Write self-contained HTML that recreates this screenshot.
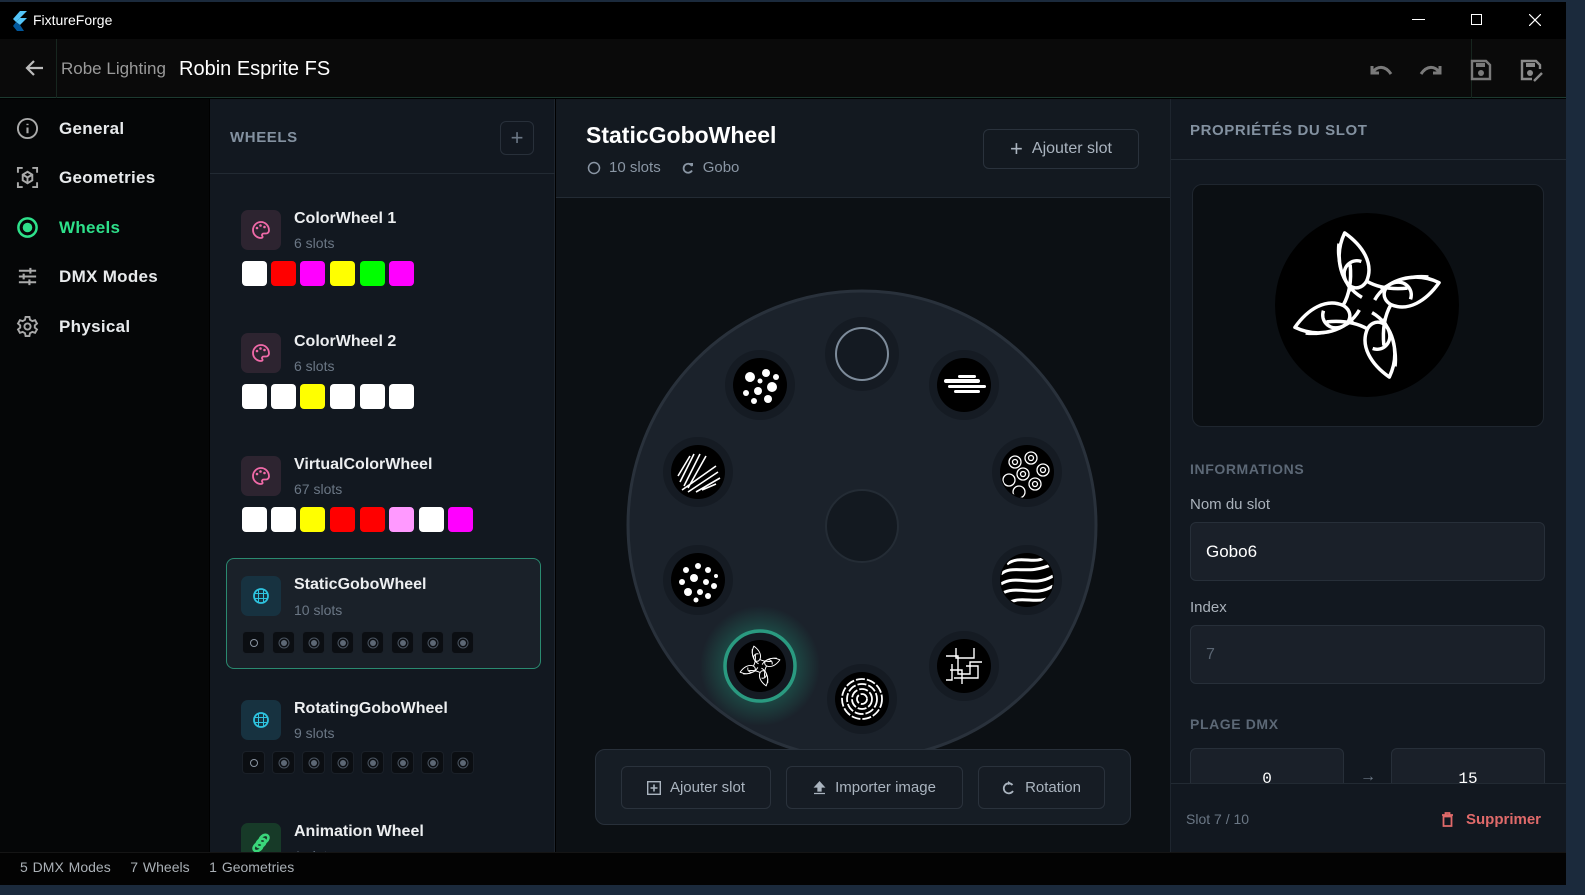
<!DOCTYPE html>
<html><head><meta charset="utf-8"><style>
*{box-sizing:border-box;margin:0;padding:0}
body{width:1585px;height:895px;overflow:hidden;background:#1b2a3c;font-family:"Liberation Sans",sans-serif;position:relative}
.abs{position:absolute}
.win{position:absolute;left:0;top:2px;width:1566px;height:883px;background:#000;overflow:hidden}
.nav{position:absolute;left:16px;display:flex;align-items:center;font-size:17px;color:#e8eaec;font-weight:bold;letter-spacing:.3px}
.nav svg{margin-right:20px}
.card{position:absolute;left:226px;width:315px;height:112px;border-radius:8px}
.ic{position:absolute;left:15px;top:18px;width:40px;height:40px;border-radius:7px}
.cn{position:absolute;left:68px;top:13px;font-size:16px;font-weight:bold;color:#eceef0}
.cs{position:absolute;left:68px;top:38px;font-size:14px;color:#6b7785}
.sw{position:absolute;top:64px;width:25px;height:25px;border-radius:4px}
.gs{position:absolute;top:64px;width:23px;height:23px;border-radius:4px;background:#0b0e12;border:1px solid #1a2028}
.gs:after{content:"";position:absolute;left:8px;top:8px;width:6px;height:6px;border-radius:50%;background:#5d6875;box-shadow:0 0 0 1.5px #0b0e12,0 0 0 2.5px #4a5460}
.gs.e:after{background:none;box-shadow:0 0 0 1px #8a95a2}
.btn{position:absolute;border:1px solid #2a323c;border-radius:6px;background:#161c24;color:#aab4bf;font-size:15px;display:flex;align-items:center;justify-content:center;gap:9px}
.lbl{position:absolute;left:1190px;font-size:14px;font-weight:bold;color:#5c6876;letter-spacing:.6px}
.inp{position:absolute;left:1190px;width:355px;height:59px;border:1px solid #272f39;border-radius:6px;background:#1a2029}
</style></head><body>
<div class="win">
<svg class="abs" style="left:10px;top:9px" width="18" height="20" viewBox="0 0 18 20"><path d="M10 0L17 0 6 11 3 8Z" fill="#54c5f8"/><path d="M6 11L10 7 17 7 10 14Z" fill="#54c5f8"/><path d="M6 11L10 14 14 20 7 20 3 15Z" fill="#01579b"/></svg>
<div class="abs" style="left:33px;top:10px;font-size:14px;color:#fff">FixtureForge</div>
<div class="abs" style="left:1412px;top:17px;width:13px;height:1px;background:#fff"></div>
<div class="abs" style="left:1471px;top:12px;width:11px;height:11px;border:1px solid #fff"></div>
<svg class="abs" style="left:1529px;top:12px" width="12" height="12"><path d="M0 0L12 12M12 0L0 12" stroke="#fff" stroke-width="1.2"/></svg>
<div class="abs" style="left:0;top:37px;width:1566px;height:59px;background:#0a0a0a;border-bottom:1px solid #1c3a30"></div>
<div class="abs" style="left:56px;top:37px;width:1px;height:59px;background:#17261f"></div>
<div class="abs" style="left:1471px;top:37px;width:1px;height:59px;background:#17261f"></div>
<svg class="abs" style="left:24px;top:57px" width="20" height="18" viewBox="0 0 20 18"><path d="M19 9H3M10 2L3 9l7 7" stroke="#bbb" stroke-width="2.2" fill="none"/></svg>
<div class="abs" style="left:61px;top:57px;font-size:17px;color:#9a9a9a">Robe Lighting</div>
<div class="abs" style="left:179px;top:56px;font-size:20px;color:#fff;font-weight:500">Robin Esprite FS</div>
<svg class="abs" style="left:1368px;top:60px" width="26" height="16" viewBox="0 0 26 16"><path d="M4 4v7h7M5 10C9 4 17 3 23 12" stroke="#7a7a7a" stroke-width="3" fill="none"/></svg>
<svg class="abs" style="left:1418px;top:60px" width="26" height="16" viewBox="0 0 26 16"><path d="M22 4v7h-7M21 10C17 4 9 3 3 12" stroke="#7a7a7a" stroke-width="3" fill="none"/></svg>
<svg class="abs" style="left:1470px;top:57px" width="22" height="22" viewBox="0 0 22 22"><path d="M2 2h14l4 4v14H2Z" fill="none" stroke="#7a7a7a" stroke-width="2.4"/><rect x="6" y="4" width="9" height="4" fill="#7a7a7a"/><circle cx="11" cy="14" r="3" fill="#7a7a7a"/></svg>
<svg class="abs" style="left:1520px;top:57px" width="24" height="24" viewBox="0 0 24 24"><path d="M12 20H2V2h14l4 4v4" fill="none" stroke="#8a8a8a" stroke-width="2.4"/><rect x="6" y="4" width="9" height="4" fill="#8a8a8a"/><circle cx="10" cy="14" r="3" fill="#8a8a8a"/><path d="M14 22l8-8" stroke="#8a8a8a" stroke-width="2.4"/></svg>
<div class="abs" style="left:0;top:97px;width:209px;height:753px;background:#050607"></div>
<div class="nav" style="top:115px"><svg width="23" height="23" viewBox="0 0 24 24"><circle cx="12" cy="12" r="10" fill="none" stroke="#aaa" stroke-width="2"/><path d="M12 11v6M12 7v1.5" stroke="#aaa" stroke-width="2.2"/></svg>General</div>
<div class="nav" style="top:164px"><svg width="23" height="23" viewBox="0 0 24 24" fill="none" stroke="#aaa" stroke-width="2"><path d="M2 7V2h5M17 2h5v5M22 17v5h-5M7 22H2v-5"/><path d="M12 6l5 3v6l-5 3-5-3V9ZM7 9l5 3 5-3M12 12v6"/></svg>Geometries</div>
<div class="nav" style="top:214px;color:#2ee08a"><svg width="23" height="23" viewBox="0 0 24 24"><circle cx="12" cy="12" r="9.5" fill="none" stroke="#2ee08a" stroke-width="2.6"/><circle cx="12" cy="12" r="5" fill="#2ee08a"/></svg>Wheels</div>
<div class="nav" style="top:263px"><svg width="23" height="23" viewBox="0 0 24 24" stroke="#aaa" stroke-width="2.2"><path d="M3 6h18M3 12h18M3 18h18"/><path d="M15 3v6M8 9v6M14 15v6"/></svg>DMX Modes</div>
<div class="nav" style="top:313px"><svg width="23" height="23" viewBox="0 0 24 24" fill="none" stroke="#aaa" stroke-width="2"><circle cx="12" cy="12" r="3.2"/><path d="M10 2h4l.6 3 2.4 1.4 2.9-1 2 3.5-2.3 2v2.2l2.3 2-2 3.5-2.9-1L14.6 19l-.6 3h-4l-.6-3L7 17.6l-2.9 1-2-3.5 2.3-2v-2.2L2.1 8.9l2-3.5 2.9 1L9.4 5Z"/></svg>Physical</div>
<div class="abs" style="left:210px;top:97px;width:345px;height:753px;background:#121820;border-right:1px solid #1e252e"></div>
<div class="abs" style="left:210px;top:171px;width:345px;height:1px;background:#222a33"></div>
<div class="abs" style="left:230px;top:127px;font-size:15px;font-weight:bold;color:#8391a0;letter-spacing:.6px">WHEELS</div>
<div class="abs" style="left:500px;top:119px;width:34px;height:34px;border:1px solid #28303a;border-radius:6px;color:#6b7785;font-size:22px;text-align:center;line-height:31px">+</div>

<div class="card" style="top:195px"><div class="ic" style="background:#2d2430;top:13px"><svg width="40" height="40" viewBox="0 0 40 40"><path d="M20 12a8 8 0 1 0 0 16c1.5 0 2-1 1.3-2-.8-1.2 0-2.5 1.5-2.5H25a3 3 0 0 0 3-3c0-4.7-3.6-8.5-8-8.5Z" fill="none" stroke="#f06aa8" stroke-width="1.8"/><circle cx="16" cy="18" r="1.3" fill="#f06aa8"/><circle cx="19.5" cy="15.5" r="1.3" fill="#f06aa8"/><circle cx="23.5" cy="17" r="1.3" fill="#f06aa8"/></svg></div><div class="cn">ColorWheel 1</div><div class="cs">6 slots</div>
<div class="sw" style="left:16px;background:#fff"></div><div class="sw" style="left:45px;background:#f00"></div><div class="sw" style="left:74px;background:#f0f"></div><div class="sw" style="left:104px;background:#ff0"></div><div class="sw" style="left:134px;background:#0f0"></div><div class="sw" style="left:163px;background:#f0f"></div></div>

<div class="card" style="top:318px"><div class="ic" style="background:#2d2430;top:13px"><svg width="40" height="40" viewBox="0 0 40 40"><path d="M20 12a8 8 0 1 0 0 16c1.5 0 2-1 1.3-2-.8-1.2 0-2.5 1.5-2.5H25a3 3 0 0 0 3-3c0-4.7-3.6-8.5-8-8.5Z" fill="none" stroke="#f06aa8" stroke-width="1.8"/><circle cx="16" cy="18" r="1.3" fill="#f06aa8"/><circle cx="19.5" cy="15.5" r="1.3" fill="#f06aa8"/><circle cx="23.5" cy="17" r="1.3" fill="#f06aa8"/></svg></div><div class="cn">ColorWheel 2</div><div class="cs">6 slots</div>
<div class="sw" style="left:16px;background:#fff"></div><div class="sw" style="left:45px;background:#fff"></div><div class="sw" style="left:74px;background:#ff0"></div><div class="sw" style="left:104px;background:#fff"></div><div class="sw" style="left:134px;background:#fff"></div><div class="sw" style="left:163px;background:#fff"></div></div>

<div class="card" style="top:441px"><div class="ic" style="background:#2d2430;top:13px"><svg width="40" height="40" viewBox="0 0 40 40"><path d="M20 12a8 8 0 1 0 0 16c1.5 0 2-1 1.3-2-.8-1.2 0-2.5 1.5-2.5H25a3 3 0 0 0 3-3c0-4.7-3.6-8.5-8-8.5Z" fill="none" stroke="#f06aa8" stroke-width="1.8"/><circle cx="16" cy="18" r="1.3" fill="#f06aa8"/><circle cx="19.5" cy="15.5" r="1.3" fill="#f06aa8"/><circle cx="23.5" cy="17" r="1.3" fill="#f06aa8"/></svg></div><div class="cn">VirtualColorWheel</div><div class="cs">67 slots</div>
<div class="sw" style="left:16px;background:#fff"></div><div class="sw" style="left:45px;background:#fff"></div><div class="sw" style="left:74px;background:#ff0"></div><div class="sw" style="left:104px;background:#f00"></div><div class="sw" style="left:134px;background:#f00"></div><div class="sw" style="left:163px;background:#f9f"></div><div class="sw" style="left:193px;background:#fff"></div><div class="sw" style="left:222px;background:#f0f"></div></div>

<div class="card" style="top:556px;background:#1a2129;border:1.5px solid #2a8a70;height:111px"><div class="ic" style="background:#173240;left:14px;top:17px"><svg width="40" height="40" viewBox="0 0 40 40" fill="none" stroke="#2ec4e0" stroke-width="1.8"><circle cx="20" cy="20" r="7"/><path d="M17.5 14v12M22.5 14v12M14 17.5h12M14 22.5h12" stroke-width="1"/></svg></div><div class="cn" style="left:67px;top:17px">StaticGoboWheel</div><div class="cs" style="left:67px;top:43px">10 slots</div>
<div class="gs e" style="left:15px;top:72px"></div><div class="gs" style="left:45px;top:72px"></div><div class="gs" style="left:75px;top:72px"></div><div class="gs" style="left:104px;top:72px"></div><div class="gs" style="left:134px;top:72px"></div><div class="gs" style="left:164px;top:72px"></div><div class="gs" style="left:194px;top:72px"></div><div class="gs" style="left:224px;top:72px"></div></div>

<div class="card" style="top:685px"><div class="ic" style="background:#173240;top:13px"><svg width="40" height="40" viewBox="0 0 40 40" fill="none" stroke="#2ec4e0" stroke-width="1.8"><circle cx="20" cy="20" r="7"/><path d="M17.5 14v12M22.5 14v12M14 17.5h12M14 22.5h12" stroke-width="1"/></svg></div><div class="cn">RotatingGoboWheel</div><div class="cs">9 slots</div>
<div class="gs e" style="left:16px"></div><div class="gs" style="left:46px"></div><div class="gs" style="left:76px"></div><div class="gs" style="left:105px"></div><div class="gs" style="left:135px"></div><div class="gs" style="left:165px"></div><div class="gs" style="left:195px"></div><div class="gs" style="left:225px"></div></div>

<div class="card" style="top:808px"><div class="ic" style="background:#173a28;top:13px"><svg width="40" height="40" viewBox="0 0 40 40" fill="none" stroke="#3ad67a" stroke-width="2.6"><ellipse cx="17" cy="24" rx="5" ry="3.5" transform="rotate(-40 17 24)"/><ellipse cx="20" cy="20" rx="5" ry="3.5" transform="rotate(-40 20 20)"/><ellipse cx="23" cy="16" rx="5" ry="3.5" transform="rotate(-40 23 16)"/></svg></div><div class="cn">Animation Wheel</div><div class="cs">1 slots</div></div>

<div class="abs" style="left:556px;top:97px;width:614px;height:753px;background:#0c1014"></div>
<div class="abs" style="left:556px;top:97px;width:614px;height:99px;background:#131920;border-bottom:1px solid #232b34"></div>
<div class="abs" style="left:586px;top:120px;font-size:23px;font-weight:bold;color:#fff">StaticGoboWheel</div>
<div class="abs" style="left:587px;top:157px;font-size:15px;color:#8a96a4;display:flex;align-items:center"><svg width="14" height="14" style="margin-right:8px"><circle cx="7" cy="7" r="5.5" fill="none" stroke="#8a96a4" stroke-width="1.5"/></svg>10 slots<svg width="14" height="14" style="margin:0 8px 0 20px" viewBox="0 0 14 14"><path d="M11 5A4.5 4.5 0 1 0 11 9.5" fill="none" stroke="#8a96a4" stroke-width="1.8"/><path d="M9 2l3 0 0 3.5Z" fill="#8a96a4"/></svg>Gobo</div>
<div class="btn" style="left:983px;top:127px;width:156px;height:40px;background:#131920;font-size:16px"><span style="font-size:22px;font-weight:300">+</span>Ajouter slot</div>

<svg class="abs" style="left:556px;top:197px" width="614" height="653" viewBox="556 197 614 653">
<defs>
<radialGradient id="gl"><stop offset="0.6" stop-color="#1f8a70" stop-opacity=".35"/><stop offset="1" stop-color="#1f8a70" stop-opacity="0"/></radialGradient>
<clipPath id="c1"><circle r="26"/></clipPath>
<g id="knot" fill="none" stroke="#fff" stroke-width="2.4" stroke-linejoin="round">
<g id="pet">
<path d="M-2 -6C-14 -18 -14 -38 -2 -52C8 -40 12 -26 4 -16C-2 -10 -10 -14 -10 -22C-10 -30 -2 -34 4 -30"/>
<path d="M4 -16C10 -10 18 -6 30 -4"/>
<path d="M-8 -12C-12 -24 -12 -36 -8 -46" stroke-width="1.8"/>
</g>
<use href="#pet" transform="rotate(90)"/><use href="#pet" transform="rotate(180)"/><use href="#pet" transform="rotate(270)"/>
</g>
</defs>
<circle cx="862" cy="523" r="234" fill="#1b222b" stroke="#29313b" stroke-width="3"/>
<circle cx="862" cy="524" r="36" fill="#131920" stroke="#242c35" stroke-width="2"/>
<g fill="#151b23">
<circle cx="862" cy="352" r="37"/><circle cx="964" cy="383" r="35"/><circle cx="1027" cy="470" r="35"/><circle cx="1027" cy="578" r="35"/><circle cx="964" cy="664" r="35"/><circle cx="862" cy="697" r="35"/><circle cx="698" cy="578" r="35"/><circle cx="698" cy="470" r="35"/><circle cx="760" cy="383" r="35"/>
</g>
<circle cx="760" cy="664" r="60" fill="url(#gl)"/>
<circle cx="760" cy="664" r="35" fill="#151b23" stroke="#2a9a80" stroke-width="3.5"/>
<circle cx="862" cy="352" r="26" fill="#141a22" stroke="#7d8b9a" stroke-width="2"/>
<g fill="#000"><circle cx="964" cy="383" r="27"/><circle cx="1027" cy="470" r="27"/><circle cx="1027" cy="578" r="27"/><circle cx="964" cy="664" r="27"/><circle cx="862" cy="697" r="27"/><circle cx="760" cy="664" r="26"/><circle cx="698" cy="578" r="27"/><circle cx="698" cy="470" r="27"/><circle cx="760" cy="383" r="27"/></g>
<g transform="translate(760 383)" clip-path="url(#c1)" fill="#fff"><circle cx="-10" cy="-8" r="5"/><circle cx="6" cy="-12" r="4"/><circle cx="12" cy="2" r="5"/><circle cx="-2" cy="6" r="4"/><circle cx="-14" cy="8" r="3"/><circle cx="8" cy="14" r="4"/><circle cx="-6" cy="16" r="3"/><circle cx="16" cy="-8" r="3"/><circle cx="0" cy="-4" r="2.5"/></g>
<g transform="translate(964 383)" fill="#fff"><rect x="-20" y="-6" width="36" height="4" rx="2"/><rect x="-16" y="0" width="38" height="3" rx="1.5"/><rect x="-10" y="5" width="26" height="3" rx="1.5"/><rect x="-6" y="-10" width="18" height="3" rx="1.5"/></g>
<g transform="translate(698 470)" stroke="#fff" stroke-width="1.6"><path d="M-18 10L-4-18M-14 14L2-18M-10 16L8-16M-16 18L18-6M-10 20L20 0M-2 20L22 6M4 18L18 12M-20 4L-8-16"/></g>
<g transform="translate(1027 470)" fill="none" stroke="#fff" stroke-width="1.3" clip-path="url(#c1)"><circle cx="-12" cy="-10" r="6"/><circle cx="-12" cy="-10" r="2.5"/><circle cx="4" cy="-14" r="6"/><circle cx="4" cy="-14" r="2.5"/><circle cx="16" cy="-2" r="6"/><circle cx="16" cy="-2" r="2.5"/><circle cx="-4" cy="2" r="6"/><circle cx="-4" cy="2" r="2.5"/><circle cx="-18" cy="8" r="6"/><circle cx="8" cy="12" r="6"/><circle cx="8" cy="12" r="2.5"/><circle cx="-8" cy="20" r="6"/></g>
<g transform="translate(698 578)" clip-path="url(#c1)" fill="#fff"><circle cx="-12" cy="-10" r="3"/><circle cx="0" cy="-14" r="3"/><circle cx="10" cy="-10" r="3"/><circle cx="-16" cy="2" r="3"/><circle cx="-4" cy="-2" r="4"/><circle cx="8" cy="2" r="3"/><circle cx="16" cy="6" r="3"/><circle cx="-10" cy="12" r="4"/><circle cx="2" cy="12" r="3"/><circle cx="10" cy="16" r="3"/><circle cx="-2" cy="20" r="2.5"/><circle cx="18" cy="-4" r="2"/></g>
<g transform="translate(1027 578)" fill="none" stroke="#fff" stroke-width="3" clip-path="url(#c1)"><path d="M-26-6C-14-16 0-4 26-16M-26 4C-10-6 6 8 26-4M-26 14C-10 4 8 18 26 6M-20 24C-6 14 10 26 26 16M-20-16C-6-26 8-14 20-24"/></g>
<g transform="translate(964 664)" fill="none" stroke="#fff" stroke-width="1.4"><path d="M-18-10H-6V8H6V-4H18M-14 4H-2V18M-8-18V-8H10V-18M2 0H14V12H-10M-18 14H-12V-2"/></g>
<g transform="translate(862 697)" fill="none" stroke="#fff" stroke-width="1.8" stroke-dasharray="9 2"><circle r="5"/><circle r="10"/><circle r="15"/><circle r="20"/></g>
<g transform="translate(760 664) rotate(-15) scale(.4)"><use href="#knot"/></g>
</svg>

<div class="abs" style="left:595px;top:747px;width:536px;height:76px;border:1px solid #28303a;border-radius:10px;background:#161d25"></div>
<div class="btn" style="left:621px;top:764px;width:150px;height:43px"><svg width="14" height="14"><rect x=".7" y=".7" width="12.6" height="12.6" fill="none" stroke="#aab4bf" stroke-width="1.4"/><path d="M7 3.5v7M3.5 7h7" stroke="#aab4bf" stroke-width="1.6"/></svg>Ajouter slot</div>
<div class="btn" style="left:786px;top:764px;width:177px;height:43px"><svg width="13" height="14"><path d="M6.5 1L2 6h3v4h3V6h3ZM1 12.5h11" stroke="#aab4bf" fill="#aab4bf" stroke-width="1.3"/></svg>Importer image</div>
<div class="btn" style="left:978px;top:764px;width:127px;height:43px"><svg width="14" height="15" viewBox="0 0 14 15"><path d="M10.5 5A5 5 0 1 0 11 11" fill="none" stroke="#aab4bf" stroke-width="1.8"/><path d="M6 1l3.5 2.5L6 5Z" fill="#aab4bf"/></svg>Rotation</div>

<div class="abs" style="left:1170px;top:97px;width:396px;height:753px;background:#121820;border-left:1px solid #1e252e"></div>
<div class="abs" style="left:1171px;top:157px;width:395px;height:1px;background:#222a33"></div>
<div class="abs" style="left:1190px;top:120px;font-size:15px;font-weight:bold;color:#8391a0;letter-spacing:.6px">PROPRIÉTÉS DU SLOT</div>
<div class="abs" style="left:1192px;top:182px;width:352px;height:243px;border:1.5px solid #1f262f;border-radius:10px;background:#0b0f13"></div>
<svg class="abs" style="left:1275px;top:211px" width="184" height="184" viewBox="-92 -92 184 184"><circle r="92" fill="#000"/><g transform="rotate(-15) scale(1.45)"><use href="#knot"/></g></svg>
<div class="lbl" style="top:459px">INFORMATIONS</div>
<div class="abs" style="left:1190px;top:494px;font-size:15px;color:#aab2bb">Nom du slot</div>
<div class="inp" style="top:520px"><span class="abs" style="left:15px;top:19px;font-size:17px;color:#fff">Gobo6</span></div>
<div class="abs" style="left:1190px;top:597px;font-size:15px;color:#aab2bb">Index</div>
<div class="inp" style="top:623px"><span class="abs" style="left:15px;top:20px;font-size:16px;color:#5a6572">7</span></div>
<div class="lbl" style="top:714px">PLAGE DMX</div>
<div class="inp" style="top:746px;width:154px;text-align:center;padding-top:21px;font-family:'Liberation Mono',monospace;font-size:16px;color:#fff">0</div>
<div class="abs" style="left:1360px;top:766px;color:#6b7785;font-size:16px">→</div>
<div class="inp" style="left:1391px;top:746px;width:154px;text-align:center;padding-top:21px;font-family:'Liberation Mono',monospace;font-size:16px;color:#fff">15</div>
<div class="abs" style="left:1171px;top:781px;width:395px;height:69px;background:#121820;border-top:1px solid #222a33"></div>
<div class="abs" style="left:1186px;top:809px;font-size:14px;color:#6b7785">Slot 7 / 10</div>
<svg class="abs" style="left:1441px;top:810px" width="13" height="15" viewBox="0 0 13 15"><path d="M1 3h11M4.5 3V1h4v2M2.5 4.5h8V14h-8Z" fill="none" stroke="#e06a6a" stroke-width="1.8"/></svg>
<div class="abs" style="left:1466px;top:809px;font-size:15px;font-weight:bold;color:#e06a6a">Supprimer</div>

<div class="abs" style="left:0;top:850px;width:1566px;height:33px;background:#030303;border-top:1px solid #151515"></div>
<div class="abs" style="left:20px;top:857px;font-size:14px;color:#aab0b6;word-spacing:1px">5 DMX Modes&nbsp;&nbsp;&nbsp;&nbsp;7 Wheels&nbsp;&nbsp;&nbsp;&nbsp;1 Geometries</div>
</div>
</body></html>
